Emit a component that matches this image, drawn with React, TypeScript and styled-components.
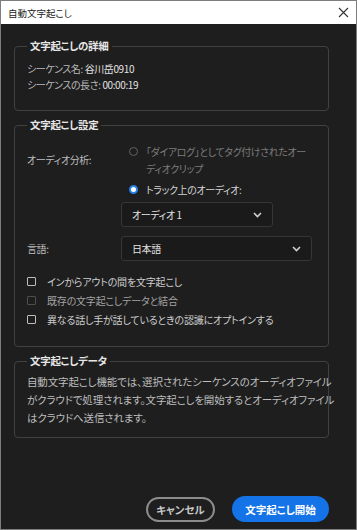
import styled, { createGlobalStyle } from "styled-components";

const GlobalStyle = createGlobalStyle`
  html, body {
    margin: 0;
    padding: 0;
    background: #1e1e1e;
  }
  * {
    box-sizing: border-box;
  }
`;

const FONT = `"Noto Sans CJK JP", "Noto Sans", sans-serif`;

export default function App() {
  return (
    <>
      <GlobalStyle />
      <StyledWindow>
        <StyledTitleBar>
          <StyledTitle>自動文字起こし</StyledTitle>
          <StyledClose aria-label="close">
            <svg width="11" height="11" viewBox="0 0 11 11">
              <path d="M1 1 L10 10 M10 1 L1 10" stroke="#333" strokeWidth="1.1" fill="none" />
            </svg>
          </StyledClose>
        </StyledTitleBar>

        <StyledBody>
          <StyledGroup $pad="8px 12px 17px">
            <StyledLegend>文字起こしの詳細</StyledLegend>
            <StyledInfoLine>
              シーケンス名: <StyledValue>谷川岳0910</StyledValue>
            </StyledInfoLine>
            <StyledInfoLine>
              シーケンスの長さ: <StyledValue>00:00:19</StyledValue>
            </StyledInfoLine>
          </StyledGroup>

          <StyledGroup $pad="11px 12px 17px">
            <StyledLegend>文字起こし設定</StyledLegend>
            <StyledFormRow>
              <StyledLabel $top="8px">オーディオ分析:</StyledLabel>
              <StyledOptions>
                <StyledRadioRow $disabled>
                  <StyledRadio $checked={false} $disabled />
                  <span>
                    「ダイアログ」としてタグ付けされたオー
                    <br />
                    ディオクリップ
                  </span>
                </StyledRadioRow>
                <StyledRadioRow>
                  <StyledRadio $checked />
                  <span>トラック上のオーディオ:</span>
                </StyledRadioRow>
                <StyledSelect $width="152px">
                  <span>オーディオ 1</span>
                  <Chevron />
                </StyledSelect>
              </StyledOptions>
            </StyledFormRow>

            <StyledFormRow $gap="9px">
              <StyledLabel $top="4px">言語:</StyledLabel>
              <StyledSelect $width="191px">
                <span>日本語</span>
                <Chevron />
              </StyledSelect>
            </StyledFormRow>

            <StyledChecks>
              <StyledCheckRow>
                <StyledCheckbox />
                <span>インからアウトの間を文字起こし</span>
              </StyledCheckRow>
              <StyledCheckRow $disabled>
                <StyledCheckbox $disabled />
                <span>既存の文字起こしデータと結合</span>
              </StyledCheckRow>
              <StyledCheckRow>
                <StyledCheckbox />
                <span>異なる話し手が話しているときの認識にオプトインする</span>
              </StyledCheckRow>
            </StyledChecks>
          </StyledGroup>

          <StyledGroup $pad="5px 12px 10px">
            <StyledLegend>文字起こしデータ</StyledLegend>
            <StyledNote>
              自動文字起こし機能では、選択されたシーケンスのオーディオファイル
              <br />
              がクラウドで処理されます。文字起こしを開始するとオーディオファイル
              <br />
              はクラウドへ送信されます。
            </StyledNote>
          </StyledGroup>
        </StyledBody>

        <StyledFooter>
          <StyledCancel>キャンセル</StyledCancel>
          <StyledPrimary>文字起こし開始</StyledPrimary>
        </StyledFooter>
      </StyledWindow>
    </>
  );
}

function Chevron() {
  return (
    <svg width="9" height="6" viewBox="0 0 9 6">
      <path d="M1 1 L4.5 4.5 L8 1" stroke="#d0d0d0" strokeWidth="1.6" fill="none" />
    </svg>
  );
}

const StyledWindow = styled.div`
  width: 357px;
  height: 530px;
  display: flex;
  flex-direction: column;
  border: 1px solid #7d7d7d;
  background: #1e1e1e;
  font-family: ${FONT};
  font-feature-settings: "palt";
  color: #c4c4c4;
`;

const StyledTitleBar = styled.div`
  height: 23px;
  flex-shrink: 0;
  display: flex;
  align-items: center;
  justify-content: space-between;
  padding: 0 6px 0 7px;
  background: #ffffff;
`;

const StyledTitle = styled.span`
  font-size: 9.5px;
  color: #1a1a1a;
`;

const StyledClose = styled.span`
  display: flex;
  align-items: center;
  margin-right: 1px;
`;

const StyledBody = styled.div`
  display: flex;
  flex-direction: column;
  gap: 7px;
  padding: 15px 27px 0 13px;
`;

const StyledGroup = styled.fieldset<{ $pad: string }>`
  margin: 0;
  min-width: 0;
  padding: ${({ $pad }) => $pad};
  border: 1px solid #414141;
  border-radius: 4px;
`;

const StyledLegend = styled.legend`
  padding: 0 3px;
  font-size: 10.5px;
  line-height: 14px;
  font-weight: 700;
  letter-spacing: -0.3px;
  color: #e6e6e6;
`;

const StyledInfoLine = styled.div`
  font-size: 10px;
  line-height: 16px;
  letter-spacing: -0.4px;
  color: #b8b8b8;
`;

const StyledValue = styled.span`
  color: #e2e2e2;
`;

const StyledFormRow = styled.div<{ $gap?: string }>`
  display: grid;
  grid-template-columns: 94px 1fr;
  align-items: start;
  margin-top: ${({ $gap }) => $gap || "0"};
`;

const StyledLabel = styled.div<{ $top: string }>`
  padding-top: ${({ $top }) => $top};
  font-size: 10px;
  line-height: 17px;
  letter-spacing: -0.4px;
  color: #bcbcbc;
`;

const StyledOptions = styled.div`
  display: flex;
  flex-direction: column;
  gap: 4px;
`;

const StyledRadioRow = styled.div<{ $disabled?: boolean }>`
  display: flex;
  align-items: flex-start;
  gap: 8px;
  padding-left: 8px;
  font-size: 10px;
  line-height: 17px;
  letter-spacing: -0.4px;
  white-space: nowrap;
  color: ${({ $disabled }) => ($disabled ? "#7c7c7c" : "#d2d2d2")};
`;

const StyledRadio = styled.span<{ $checked: boolean; $disabled?: boolean }>`
  flex-shrink: 0;
  width: 9px;
  height: 9px;
  margin-top: 4px;
  border-radius: 50%;
  border: ${({ $checked, $disabled }) =>
    $checked ? "2.5px solid #2680eb" : `1.5px solid ${$disabled ? "#626262" : "#b0b0b0"}`};
  background: ${({ $checked }) => ($checked ? "#ffffff" : "transparent")};
`;

const StyledSelect = styled.div<{ $width: string }>`
  width: ${({ $width }) => $width};
  height: 25px;
  display: flex;
  align-items: center;
  justify-content: space-between;
  padding: 0 10px 0 10px;
  background: #1a1a1a;
  border: 1px solid #363636;
  border-radius: 3px;
  font-size: 10px;
  letter-spacing: -0.4px;
  color: #e4e4e4;
`;

const StyledChecks = styled.div`
  display: flex;
  flex-direction: column;
  margin-top: 11px;
`;

const StyledCheckRow = styled.div<{ $disabled?: boolean }>`
  display: flex;
  align-items: center;
  gap: 11px;
  height: 19px;
  font-size: 10px;
  letter-spacing: -0.2px;
  white-space: nowrap;
  color: ${({ $disabled }) => ($disabled ? "#a2a2a2" : "#cdcdcd")};
`;

const StyledCheckbox = styled.span<{ $disabled?: boolean }>`
  flex-shrink: 0;
  width: 9px;
  height: 9px;
  border: 1.5px solid ${({ $disabled }) => ($disabled ? "#4e4e4e" : "#bdbdbd")};
  border-radius: 1px;
`;

const StyledNote = styled.div`
  font-size: 10.5px;
  line-height: 18px;
  letter-spacing: -0.15px;
  white-space: nowrap;
  color: #bdbdbd;
`;

const StyledFooter = styled.div`
  margin-top: auto;
  display: flex;
  justify-content: flex-end;
  align-items: center;
  gap: 17px;
  padding: 0 27px 7px 0;
`;

const StyledCancel = styled.button`
  width: 69px;
  height: 25px;
  border: 2px solid #8c8c8c;
  border-radius: 13px;
  background: transparent;
  font-family: ${FONT};
  font-feature-settings: "palt";
  font-size: 10.5px;
  font-weight: 700;
  color: #c8c8c8;
  padding: 0;
`;

const StyledPrimary = styled.button`
  width: 97px;
  height: 26px;
  border: none;
  border-radius: 13px;
  background: #1473e6;
  font-family: ${FONT};
  font-feature-settings: "palt";
  font-size: 10.5px;
  font-weight: 700;
  color: #ffffff;
  padding: 0;
`;
